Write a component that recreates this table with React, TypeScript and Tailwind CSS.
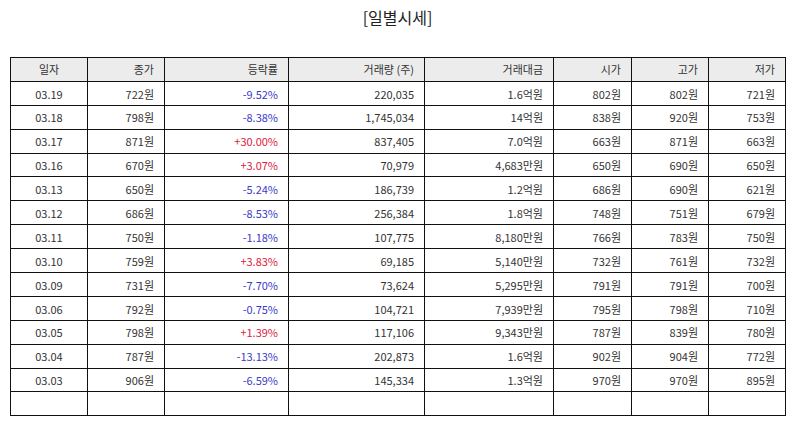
import React from "react";

type Row = [string, string, string, string, string, string, string, string];

const rows: Row[] = [
  ["03.19", "722원", "-9.52%", "220,035", "1.6억원", "802원", "802원", "721원"],
  ["03.18", "798원", "-8.38%", "1,745,034", "14억원", "838원", "920원", "753원"],
  ["03.17", "871원", "+30.00%", "837,405", "7.0억원", "663원", "871원", "663원"],
  ["03.16", "670원", "+3.07%", "70,979", "4,683만원", "650원", "690원", "650원"],
  ["03.13", "650원", "-5.24%", "186,739", "1.2억원", "686원", "690원", "621원"],
  ["03.12", "686원", "-8.53%", "256,384", "1.8억원", "748원", "751원", "679원"],
  ["03.11", "750원", "-1.18%", "107,775", "8,180만원", "766원", "783원", "750원"],
  ["03.10", "759원", "+3.83%", "69,185", "5,140만원", "732원", "761원", "732원"],
  ["03.09", "731원", "-7.70%", "73,624", "5,295만원", "791원", "791원", "700원"],
  ["03.06", "792원", "-0.75%", "104,721", "7,939만원", "795원", "798원", "710원"],
  ["03.05", "798원", "+1.39%", "117,106", "9,343만원", "787원", "839원", "780원"],
  ["03.04", "787원", "-13.13%", "202,873", "1.6억원", "902원", "904원", "772원"],
  ["03.03", "906원", "-6.59%", "145,334", "1.3억원", "970원", "970원", "895원"],
];

const headers = ["일자", "종가", "등락률", "거래량 (주)", "거래대금", "시가", "고가", "저가"];
const widths = ["w-[77px]", "w-[77px]", "w-[124px]", "w-[136px]", "w-[129px]", "w-[78px]", "w-[77px]", "w-[77px]"];

export default function App() {
  return (
    <div className="w-[795px] h-[425px] bg-white text-[#333] font-['Noto_Sans_CJK_KR','Noto_Sans',sans-serif]">
      <h1 className="pt-[5px] text-center text-[16px] leading-[24px] text-[#222]">[일별시세]</h1>
      <table className="mt-[28px] ml-[10px] w-[775px] border-collapse table-fixed text-[11px]">
        <colgroup>
          {widths.map((w, i) => (
            <col key={i} className={w} />
          ))}
        </colgroup>
        <thead>
          <tr className="bg-[#ececec]">
            {headers.map((h, i) => (
              <th
                key={h}
                className={`h-[23.9px] border border-[#111] font-normal px-[10px] py-0 ${i === 0 ? "text-center" : "text-right"}`}
              >
                {h}
              </th>
            ))}
          </tr>
        </thead>
        <tbody>
          {rows.map((r) => (
            <tr key={r[0]}>
              {r.map((c, i) => {
                let color = "";
                if (i === 2) color = c.startsWith("+") ? "text-[#e0203c]" : "text-[#3b3bc8]";
                return (
                  <td
                    key={i}
                    className={`h-[23.9px] border border-[#111] px-[10px] pt-[1px] pb-0 ${i === 0 ? "text-center" : "text-right"} ${color}`}
                  >
                    {c}
                  </td>
                );
              })}
            </tr>
          ))}
          <tr>
            {headers.map((h) => (
              <td key={h} className="h-[23.9px] border border-[#111]" />
            ))}
          </tr>
        </tbody>
      </table>
    </div>
  );
}
